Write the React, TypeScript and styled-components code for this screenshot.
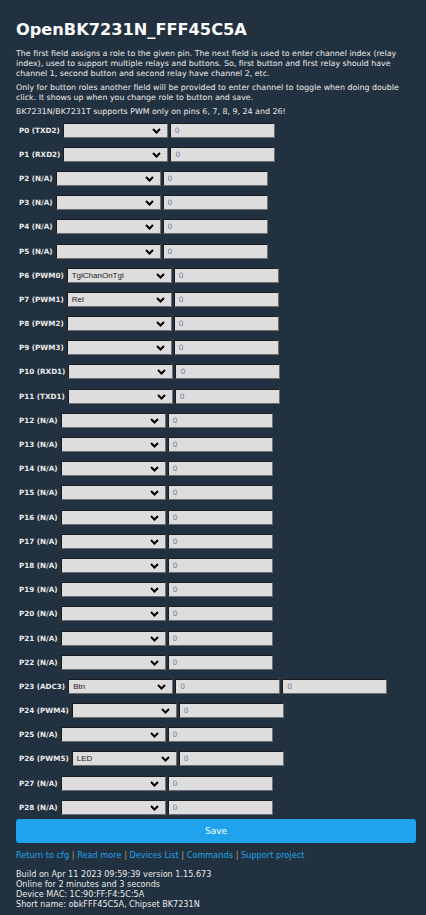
import styled, { createGlobalStyle } from 'styled-components'

interface Pin {
  label: string
  role?: string
  extra?: boolean
}

const pins: Pin[] = [
  { label: 'P0 (TXD2)' },
  { label: 'P1 (RXD2)' },
  { label: 'P2 (N/A)' },
  { label: 'P3 (N/A)' },
  { label: 'P4 (N/A)' },
  { label: 'P5 (N/A)' },
  { label: 'P6 (PWM0)', role: 'TglChanOnTgl' },
  { label: 'P7 (PWM1)', role: 'Rel' },
  { label: 'P8 (PWM2)' },
  { label: 'P9 (PWM3)' },
  { label: 'P10 (RXD1)' },
  { label: 'P11 (TXD1)' },
  { label: 'P12 (N/A)' },
  { label: 'P13 (N/A)' },
  { label: 'P14 (N/A)' },
  { label: 'P15 (N/A)' },
  { label: 'P16 (N/A)' },
  { label: 'P17 (N/A)' },
  { label: 'P18 (N/A)' },
  { label: 'P19 (N/A)' },
  { label: 'P20 (N/A)' },
  { label: 'P21 (N/A)' },
  { label: 'P22 (N/A)' },
  { label: 'P23 (ADC3)', role: 'Btn', extra: true },
  { label: 'P24 (PWM4)' },
  { label: 'P25 (N/A)' },
  { label: 'P26 (PWM5)', role: 'LED' },
  { label: 'P27 (N/A)' },
  { label: 'P28 (N/A)' },
]

const links = ['Return to cfg', 'Read more', 'Devices List', 'Commands', 'Support project']

const Chevron = () => (
  <svg width="9" height="6" viewBox="0 0 9 6">
    <path d="M1 1 L4.5 4.5 L8 1" fill="none" stroke="#000" strokeWidth="2" />
  </svg>
)

const App = () => {
  return (
    <>
      <GlobalStyle />
      <Page>
        <Title>OpenBK7231N_FFF45C5A</Title>
        <Text>
          The first field assigns a role to the given pin. The next field is used to enter channel
          index (relay index), used to support multiple relays and buttons. So, first button and
          first relay should have channel 1, second button and second relay have channel 2, etc.
        </Text>
        <Text>
          Only for button roles another field will be provided to enter channel to toggle when doing
          double click. It shows up when you change role to button and save.
        </Text>
        <Text>BK7231N/BK7231T supports PWM only on pins 6, 7, 8, 9, 24 and 26!</Text>

        <PinList>
          {pins.map((pin) => (
            <Row key={pin.label}>
              <Label>{pin.label}</Label>
              <SelectWrap>
                <Select defaultValue={pin.role || ''}>
                  <option value="">{''}</option>
                  {pin.role && <option value={pin.role}>{pin.role}</option>}
                </Select>
                <ArrowIcon>
                  <Chevron />
                </ArrowIcon>
              </SelectWrap>
              <Field defaultValue="0" />
              {pin.extra && <Field defaultValue="0" />}
            </Row>
          ))}
        </PinList>

        <SaveButton>Save</SaveButton>

        <Links>
          {links.map((link, i) => (
            <span key={link}>
              {i > 0 && <Sep> | </Sep>}
              <Link href="#">{link}</Link>
            </span>
          ))}
        </Links>

        <Footer>
          Build on Apr 11 2023 09:59:39 version 1.15.673
          <br />
          Online for 2 minutes and 3 seconds
          <br />
          Device MAC: 1C:90:FF:F4:5C:5A
          <br />
          Short name: obkFFF45C5A, Chipset BK7231N
        </Footer>
      </Page>
    </>
  )
}

const GlobalStyle = createGlobalStyle`
  body {
    margin: 0;
    background: #22313f;
    color: #eaeaea;
    font-family: "DejaVu Sans", Verdana, sans-serif;
  }
`

const Page = styled.div`
  width: 426px;
  min-height: 915px;
  box-sizing: border-box;
  padding: 19px 10px 0 16px;
  background: #22313f;
`

const Title = styled.h1`
  margin: 0 0 8px;
  font-size: 16.2px;
  line-height: 22px;
  font-weight: bold;
  color: #fafafa;
`

const Text = styled.p`
  margin: 0 0 4px;
  font-size: 7.9px;
  line-height: 10px;
  color: #eaeaea;
`

const PinList = styled.div`
  display: flex;
  flex-direction: column;
  margin-top: -3px;
`

const Row = styled.div`
  display: flex;
  align-items: center;
  gap: 2px;
  height: 24.2px;
`

const Label = styled.span`
  padding-left: 3px;
  margin-right: 1px;
  font-size: 7.2px;
  font-weight: bold;
  color: #eaeaea;
  white-space: nowrap;
`

const SelectWrap = styled.div`
  position: relative;
  flex: none;
  width: 105px;
  height: 15px;
`

const Select = styled.select`
  display: block;
  appearance: none;
  width: 100%;
  height: 100%;
  box-sizing: border-box;
  margin: 0;
  padding: 0 4px;
  background: #dddddd;
  border: 1px solid;
  border-color: #1b1b1b #6f6f6f #6f6f6f #1b1b1b;
  border-radius: 0;
  font-family: "Liberation Sans", Arial, sans-serif;
  font-size: 8px;
  color: #222;
  outline: none;
`

const ArrowIcon = styled.span`
  position: absolute;
  right: 7px;
  top: 5px;
  display: flex;
  pointer-events: none;
`

const Field = styled.input`
  display: block;
  flex: none;
  width: 105px;
  height: 15px;
  box-sizing: border-box;
  margin: 0;
  padding: 0 4px;
  background: #dddddd;
  border: 1px solid;
  border-color: #1b1b1b #6f6f6f #6f6f6f #1b1b1b;
  font-family: "DejaVu Sans", Verdana, sans-serif;
  font-size: 7.5px;
  color: #6c7c9c;
  outline: none;
`

const SaveButton = styled.button`
  display: block;
  width: 100%;
  height: 24px;
  margin-top: 0;
  border: 0;
  border-radius: 3px;
  background: #1fa3ec;
  color: #faffff;
  font-family: "DejaVu Sans", Verdana, sans-serif;
  font-size: 9px;
  cursor: pointer;
`

const Links = styled.div`
  margin-top: 7px;
  font-size: 8.2px;
  line-height: 10px;
`

const Link = styled.a`
  color: #1fa3ec;
  text-decoration: none;
`

const Sep = styled.span`
  color: #c8a064;
`

const Footer = styled.div`
  margin-top: 9px;
  font-size: 8.1px;
  line-height: 10px;
  color: #eaeaea;
`

export default App
